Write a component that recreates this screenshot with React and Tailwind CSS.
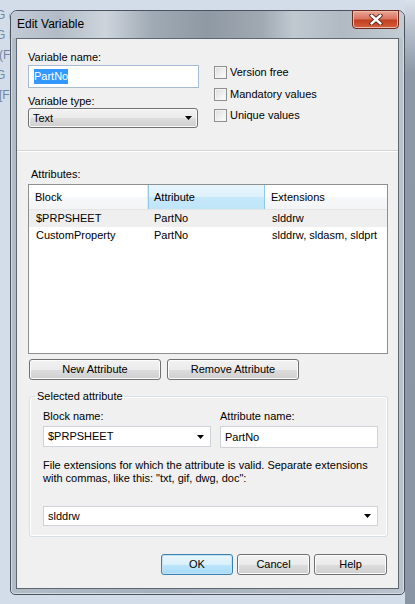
import React from "react";

const Arrow = () => (
    <svg width="7" height="4" viewBox="0 0 7 4" className="shrink-0">
        <path d="M0 0h7L3.5 4z" fill="#000" />
    </svg>
);

const Btn = ({ children, className = "", focused = false }) => (
    <div
        className={`flex items-center justify-center h-[21px] rounded-[3px] border leading-[13px] ${focused
            ? "border-[#3c7fb1] bg-[linear-gradient(to_bottom,#eaf6fd_0%,#d9f0fc_50%,#bee6fd_50%,#a7d9f5_100%)] shadow-[inset_0_0_0_1px_#c2e3f6]"
            : "border-[#707070] bg-[linear-gradient(to_bottom,#f2f2f2_0%,#ebebeb_50%,#dddddd_50%,#cfcfcf_100%)] shadow-[inset_0_0_0_1px_#fcfcfc]"
            } ${className}`}
    >
        {children}
    </div>
);

const Check = ({ label, className = "" }) => (
    <div className={`flex items-center h-[13px] ${className}`}>
        <div className="w-[13px] h-[13px] border border-[#8e8f8f] bg-[linear-gradient(135deg,#dcdcdc,#ffffff)] shadow-[inset_0_0_0_1px_#f4f4f4] shrink-0" />
        <span className="ml-[3px] leading-[13px]">{label}</span>
    </div>
);

const rows = [
    { block: "$PRPSHEET", attr: "PartNo", ext: "slddrw", sel: true },
    { block: "CustomProperty", attr: "PartNo", ext: "slddrw, sldasm, sldprt", sel: false },
];

const Window = () => (
    <div className="w-[395px] h-[585px] mt-[10px] shrink-0 flex flex-col rounded-t-[7px] rounded-b-[5px] border border-[#4b545e] bg-[linear-gradient(to_right,#b2bcc7,#a6b0ba_40%,#b0b9c2_70%,#bac3cc)] shadow-[inset_0_0_0_1px_#d5dce4]">
        {/* title bar */}
        <div className="h-[27px] flex items-start rounded-t-[6px] bg-[linear-gradient(to_right,#c3ccd6_0%,#b3bcc6_12%,#cdd4dc_24%,#a0aab4_36%,#8f99a3_50%,#a1aab3_64%,#c0c8d0_72%,#b1bac3_84%,#c3cbd3_100%)]">
            <span className="pl-[6px] pt-[6px] text-[12px] leading-[15px] text-black">Edit Variable</span>
            <div className="ml-auto mr-[5px] mt-[-1px] w-[47px] h-[19px] rounded-b-[4px] border border-[#6b2a20] bg-[linear-gradient(to_bottom,#e9a898_0%,#d9755f_45%,#c2401f_55%,#d4603d_100%)] shadow-[inset_0_0_0_1px_#efb9a9] flex items-center justify-center">
                <svg width="14" height="11" viewBox="0 0 14 11">
                    <path d="M2.5 1.5L11.5 9.5M11.5 1.5L2.5 9.5" stroke="#4a1a12" strokeWidth="4.2" strokeLinecap="round" />
                    <path d="M2.5 1.5L11.5 9.5M11.5 1.5L2.5 9.5" stroke="#ffffff" strokeWidth="2.4" strokeLinecap="round" />
                </svg>
            </div>
        </div>

        {/* client area */}
        <div className="mx-[5px] h-[551px] border border-[#5d6671] bg-[#f0f0f0] flex flex-col">
            <div className="flex pl-[11px] h-[111px]">
                <div className="w-[171px] flex flex-col pt-[12px]">
                    <span className="leading-[13px]">Variable name:</span>
                    <div className="mt-[1px] h-[23px] border border-[#a7bcd4] bg-white flex items-center pl-[5px]">
                        <span className="bg-[#3399ff] text-white leading-[15px]">PartNo</span>
                    </div>
                    <span className="mt-[7px] leading-[13px]">Variable type:</span>
                    <div className="h-[20px] w-[170px] rounded-[3px] border border-[#707070] bg-[linear-gradient(to_bottom,#f2f2f2_0%,#ebebeb_50%,#dddddd_50%,#cfcfcf_100%)] shadow-[inset_0_0_0_1px_#fbfbfb] flex items-center pl-[4px] pr-[5px]">
                        <span className="flex-1 leading-[13px]">Text</span>
                        <Arrow />
                    </div>
                </div>
                <div className="ml-[15px] flex flex-col pt-[27px]">
                    <Check label="Version free" />
                    <Check label="Mandatory values" className="mt-[9px]" />
                    <Check label="Unique values" className="mt-[8px]" />
                </div>
            </div>
            <div className="h-[2px] border-t border-[#d5d5d5] border-b border-b-white" />

            <span className="mt-[16px] ml-[14px] leading-[13px]">Attributes:</span>
            <div className="mt-[3px] ml-[11px] w-[360px] h-[170px] border border-[#8e8f8f] bg-white flex flex-col">
                <div className="h-[25px] flex border-b border-[#e5e5e5] bg-[linear-gradient(to_bottom,#ffffff_0%,#ffffff_50%,#f7f8f9_50%,#f3f4f6_100%)]">
                    <div className="w-[119px] flex items-center pl-[6px] border-r border-[#e4e6e8]">Block</div>
                    <div className="w-[117px] flex items-center pl-[5px] border-x border-[#92c9e6] bg-[linear-gradient(to_bottom,#e8f6fd_0%,#dcf1fc_50%,#c5e8fa_50%,#bfe5f9_100%)]">Attribute</div>
                    <div className="flex-1 flex items-center pl-[6px]">Extensions</div>
                </div>
                {rows.map((r) => (
                    <div key={r.block} className={`h-[17px] flex items-center ${r.sel ? "bg-[#efefef]" : "bg-white"}`}>
                        <div className="w-[119px] pl-[7px] leading-[13px]">{r.block}</div>
                        <div className="w-[117px] pl-[6px] leading-[13px]">{r.attr}</div>
                        <div className="flex-1 pl-[7px] leading-[13px] whitespace-nowrap">{r.ext}</div>
                    </div>
                ))}
            </div>

            <div className="mt-[5px] ml-[12px] flex gap-[6px]">
                <Btn className="w-[132px]">New Attribute</Btn>
                <Btn className="w-[132px]">Remove Attribute</Btn>
            </div>

            <fieldset className="mt-[10px] ml-[12px] w-[359px] border border-[#d5dfe5] rounded-[3px] pl-[5px] pb-[10px] shadow-[inset_0_0_0_1px_#ffffff]">
                <legend className="px-[2px] leading-[13px]">Selected attribute</legend>
                <div className="pl-[8px] pr-[9px] flex flex-col">
                    <div className="mt-[7px] flex">
                        <div className="w-[168px] flex flex-col">
                            <span className="leading-[13px]">Block name:</span>
                            <div className="mt-[3px] h-[21px] border border-[#cfd3d9] bg-white flex items-center pl-[4px] pr-[6px]">
                                <span className="flex-1 leading-[13px]">$PRPSHEET</span>
                                <Arrow />
                            </div>
                        </div>
                        <div className="ml-[9px] flex-1 flex flex-col">
                            <span className="leading-[13px]">Attribute name:</span>
                            <div className="mt-[3px] h-[22px] border border-[#cfd3d9] bg-white flex items-center pl-[4px]">
                                <span className="leading-[13px]">PartNo</span>
                            </div>
                        </div>
                    </div>
                    <p className="mt-[11px] leading-[13px]">
                        File extensions for which the attribute is valid. Separate extensions with commas, like this: "txt, gif, dwg, doc":
                    </p>
                    <div className="mt-[21px] h-[20px] border border-[#cfd3d9] bg-white flex items-center pl-[4px] pr-[6px]">
                        <span className="flex-1 leading-[13px]">slddrw</span>
                        <Arrow />
                    </div>
                </div>
            </fieldset>

            <div className="mt-[17px] pr-[11px] flex justify-end gap-[4px]">
                <Btn focused className="w-[72px]">OK</Btn>
                <Btn className="w-[73px]">Cancel</Btn>
                <Btn className="w-[73px]">Help</Btn>
            </div>
        </div>
    </div>
);

export default function App() {
    return (
        <div className="w-[415px] h-[604px] overflow-hidden flex bg-[#d3dde9] font-['Liberation_Sans',Arial,sans-serif] text-[11px] text-black">
            <div className="w-[10px] shrink-0 overflow-hidden pt-[5px] flex flex-col leading-[20px] text-[12px] text-[#7186a4] whitespace-nowrap">
                <span className="ml-[-4px]">G (F</span>
                <span className="ml-[-4px]">G I</span>
                <span className="ml-[-1px]">(F</span>
                <span className="ml-[-4px]">G</span>
                <span className="ml-[-1px]">[F</span>
            </div>
            <Window />
            <div className="flex-1 bg-[linear-gradient(to_bottom,#d9e1ea_0%,#b6c0cc_5%,#8e99a7_12%,#8995a4_100%)]" />
        </div>
    );
}
